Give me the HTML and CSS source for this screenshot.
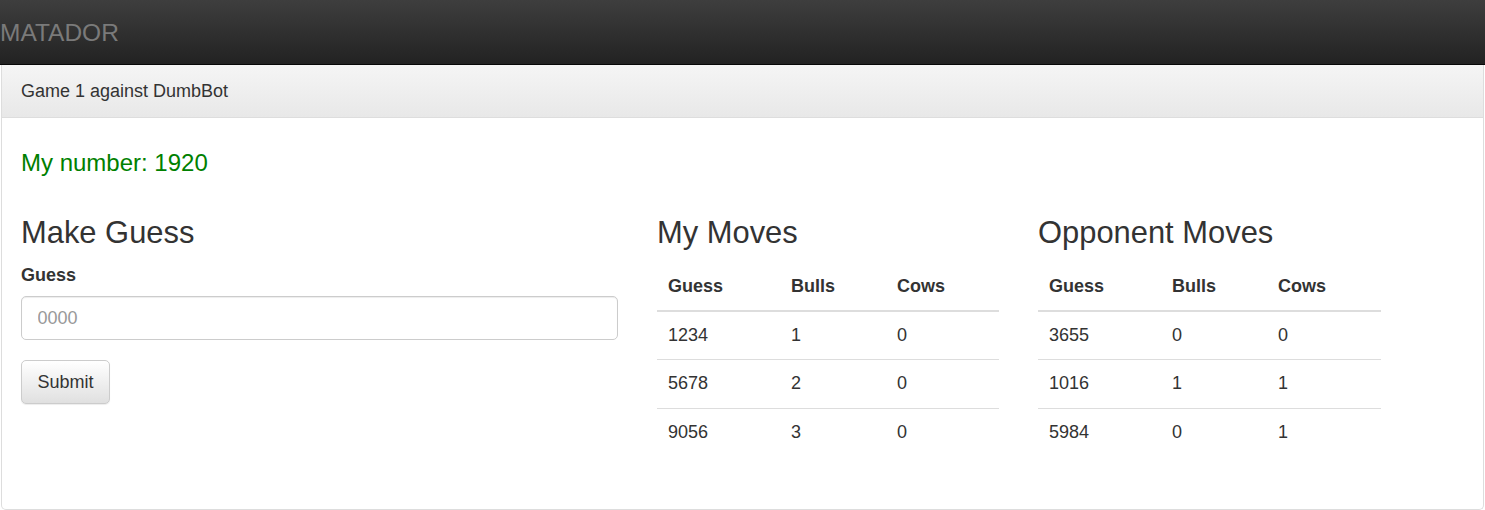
FILE: index.html
```html
<!DOCTYPE html>
<html>
<head>
<meta charset="utf-8">
<title>Matador</title>
<link rel="stylesheet" href="styles.css">
</head>
<body>
<nav class="navbar">
  <span class="brand">MATADOR</span>
</nav>
<div class="panel">
  <div class="panel-heading">Game 1 against DumbBot</div>
  <div class="panel-body">
    <h4 class="my-number">My number: 1920</h4>
    <div class="cols">
      <div class="col col-guess">
        <h3>Make Guess</h3>
        <form class="guess-form">
          <label class="label" for="guess">Guess</label>
          <input class="input" id="guess" type="text" placeholder="0000">
          <button class="btn" type="button">Submit</button>
        </form>
      </div>
      <div class="col col-moves">
        <h3>My Moves</h3>
        <table class="table">
          <thead>
            <tr><th class="c1">Guess</th><th class="c2">Bulls</th><th class="c3">Cows</th></tr>
          </thead>
          <tbody>
            <tr><td>1234</td><td>1</td><td>0</td></tr>
            <tr><td>5678</td><td>2</td><td>0</td></tr>
            <tr><td>9056</td><td>3</td><td>0</td></tr>
          </tbody>
        </table>
      </div>
      <div class="col col-opp">
        <h3>Opponent Moves</h3>
        <table class="table">
          <thead>
            <tr><th class="c1">Guess</th><th class="c2">Bulls</th><th class="c3">Cows</th></tr>
          </thead>
          <tbody>
            <tr><td>3655</td><td>0</td><td>0</td></tr>
            <tr><td>1016</td><td>1</td><td>1</td></tr>
            <tr><td>5984</td><td>0</td><td>1</td></tr>
          </tbody>
        </table>
      </div>
    </div>
  </div>
</div>
</body>
</html>
```

FILE: styles.css
```css
* { box-sizing: border-box; }

html, body {
  margin: 0;
  padding: 0;
  background: #fff;
}

body {
  font-family: "Liberation Sans", Arial, Helvetica, sans-serif;
  font-size: 18px;
  line-height: 25.7px;
  color: #333;
}

.navbar {
  height: 65px;
  background: linear-gradient(to bottom, #3e3e3e 0%, #222 100%);
  border-bottom: 1px solid #080808;
  display: flex;
  align-items: center;
}

.brand {
  font-size: 24.5px;
  line-height: 26px;
  color: #7a7a7a;
  padding-left: 0;
  margin-top: 1px;
}

.panel {
  margin: 0 1px;
  border: 1px solid #ddd;
  border-top: 0;
  border-radius: 0 0 5px 5px;
  height: 445px;
}

.panel-heading {
  height: 53px;
  padding: 13px 19px 0 19px;
  line-height: 26px;
  background: linear-gradient(to bottom, #f5f5f5 0%, #e8e8e8 100%);
  border-bottom: 1px solid #ddd;
  color: #333;
}

.panel-body {
  padding: 19px 19px 20px 19px;
}

.my-number {
  margin: 13px 0 13px 0;
  font-size: 24px;
  line-height: 26px;
  font-weight: normal;
  color: #008000;
}

.cols {
  display: flex;
  gap: 39px;
}

.col-guess { width: 597px; }
.col-moves { width: 342px; }
.col-opp { width: 343px; }

h3 {
  margin: 27px 0 13px 0;
  font-size: 30.9px;
  line-height: 34px;
  font-weight: normal;
  color: #333;
}

.guess-form {
  display: flex;
  flex-direction: column;
  align-items: flex-start;
}

.label {
  font-weight: bold;
  line-height: 25.7px;
  margin-bottom: 7.3px;
}

.input {
  width: 597px;
  height: 44px;
  padding: 0 15.5px;
  font-family: "Liberation Sans", Arial, Helvetica, sans-serif;
  font-size: 18px;
  color: #555;
  border: 1px solid #ccc;
  border-radius: 5px;
  box-shadow: inset 0 1px 1px rgba(0,0,0,0.075);
  margin-bottom: 20px;
}

.input::placeholder { color: #999; }

.btn {
  height: 44px;
  padding: 0 15.5px;
  font-family: "Liberation Sans", Arial, Helvetica, sans-serif;
  font-size: 18px;
  color: #333;
  background: linear-gradient(to bottom, #fff 0%, #e0e0e0 100%);
  border: 1px solid #ccc;
  border-radius: 5px;
  box-shadow: inset 0 1px 0 rgba(255,255,255,0.15), 0 1px 1px rgba(0,0,0,0.075);
}

.table {
  width: 100%;
  border-collapse: collapse;
  border-spacing: 0;
}

.table th, .table td {
  text-align: left;
  padding-left: 11px;
  padding-right: 10px;
  line-height: 25.7px;
  vertical-align: top;
}

.table th {
  padding-top: 11px;
  padding-bottom: 10px;
  font-weight: bold;
  border-bottom: 2.5px solid #ddd;
}

.table td {
  padding-top: 11px;
  padding-bottom: 11px;
  border-top: 1px solid #ddd;
}

.table tbody tr:first-child td { border-top: 0; }

.c1 { width: 123px; }
.c2 { width: 106px; }
.c3 { width: auto; }
```
